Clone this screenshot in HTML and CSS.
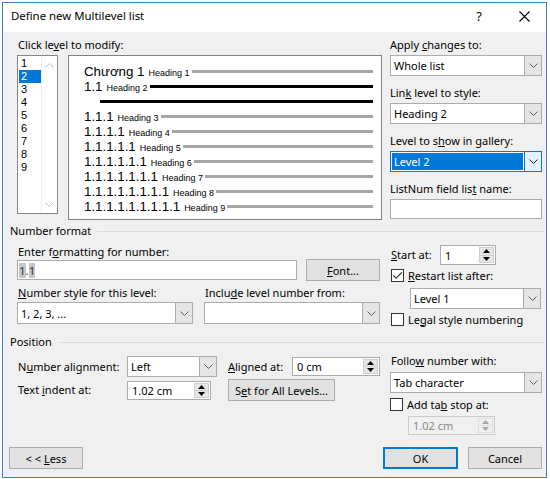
FILE: index.html
```html
<!DOCTYPE html>
<html>
<head>
<meta charset="utf-8">
<title>Define new Multilevel list</title>
<link rel="stylesheet" href="styles.css">
</head>
<body>
<div class="window">
  <div class="titlebar">
    <span class="title">Define new Multilevel list</span>
    <span class="help">?</span>
    <span class="close"><svg width="11" height="11" viewBox="0 0 11 11"><path d="M0.5 0.5L10.5 10.5M10.5 0.5L0.5 10.5" stroke="#000" stroke-width="1.1" fill="none"/></svg></span>
  </div>
  <div class="content">
    <div class="top">
      <div class="left-top">
        <div class="label ind">Click le<u>v</u>el to modify:</div>
        <div class="top-row">
          <div class="levels">
            <div class="level-items">
              <div class="lv">1</div>
              <div class="lv sel">2</div>
              <div class="lv">3</div>
              <div class="lv">4</div>
              <div class="lv">5</div>
              <div class="lv">6</div>
              <div class="lv">7</div>
              <div class="lv">8</div>
              <div class="lv">9</div>
            </div>
            <div class="vscroll">
              <svg width="9" height="5" viewBox="0 0 9 5"><path d="M0.5 4.5L4.5 0.5L8.5 4.5" stroke="#c2c2c2" fill="none"/></svg>
              <svg width="9" height="5" viewBox="0 0 9 5"><path d="M0.5 0.5L4.5 4.5L8.5 0.5" stroke="#c2c2c2" fill="none"/></svg>
            </div>
          </div>
          <div class="preview">
            <div class="prow"><span class="num">Chương 1</span><span class="hd">Heading 1</span><span class="bar"></span></div>
            <div class="prow"><span class="num">1.1</span><span class="hd">Heading 2</span><span class="bar dark"></span></div>
            <div class="prow indent"><span class="bar dark"></span></div>
            <div class="prow"><span class="num">1.1.1</span><span class="hd">Heading 3</span><span class="bar"></span></div>
            <div class="prow"><span class="num">1.1.1.1</span><span class="hd">Heading 4</span><span class="bar"></span></div>
            <div class="prow"><span class="num">1.1.1.1.1</span><span class="hd">Heading 5</span><span class="bar"></span></div>
            <div class="prow"><span class="num">1.1.1.1.1.1</span><span class="hd">Heading 6</span><span class="bar"></span></div>
            <div class="prow"><span class="num">1.1.1.1.1.1.1</span><span class="hd">Heading 7</span><span class="bar"></span></div>
            <div class="prow"><span class="num">1.1.1.1.1.1.1.1</span><span class="hd">Heading 8</span><span class="bar"></span></div>
            <div class="prow"><span class="num">1.1.1.1.1.1.1.1.1</span><span class="hd">Heading 9</span><span class="bar"></span></div>
          </div>
        </div>
      </div>
      <div class="right-top">
        <div class="field">
          <div class="label">Apply <u>c</u>hanges to:</div>
          <div class="combo"><span class="ctext">Whole list</span><span class="carrow"><svg width="9" height="5" viewBox="0 0 9 5"><path d="M0.5 0.5L4.5 4.5L8.5 0.5" stroke="#606060" fill="none"/></svg></span></div>
        </div>
        <div class="field">
          <div class="label">Lin<u>k</u> level to style:</div>
          <div class="combo"><span class="ctext">Heading 2</span><span class="carrow"><svg width="9" height="5" viewBox="0 0 9 5"><path d="M0.5 0.5L4.5 4.5L8.5 0.5" stroke="#606060" fill="none"/></svg></span></div>
        </div>
        <div class="field">
          <div class="label">Level to s<u>h</u>ow in gallery:</div>
          <div class="combo focus"><span class="ctext"><span class="hl">Level 2</span></span><span class="carrow"><svg width="9" height="5" viewBox="0 0 9 5"><path d="M0.5 0.5L4.5 4.5L8.5 0.5" stroke="#202020" fill="none"/></svg></span></div>
        </div>
        <div class="field">
          <div class="label">ListNum field lis<u>t</u> name:</div>
          <div class="textbox tall"></div>
        </div>
      </div>
    </div>

    <div class="group-head nf-head"><span>Number format</span></div>
    <div class="nf">
      <div class="nf-left">
        <div class="label ind">Enter f<u>o</u>rmatting for number:</div>
        <div class="fmt-row">
          <div class="textbox fmt"><span class="fmt-text"><span class="fld">1</span>.<span class="fld">1</span></span></div>
          <div class="button font-btn"><span><u>F</u>ont...</span></div>
        </div>
        <div class="pair labels2">
          <div class="label ind"><u>N</u>umber style for this level:</div>
          <div class="label ind">Inclu<u>d</u>e level number from:</div>
        </div>
        <div class="pair">
          <div class="combo"><span class="ctext">1, 2, 3, ...</span><span class="carrow"><svg width="9" height="5" viewBox="0 0 9 5"><path d="M0.5 0.5L4.5 4.5L8.5 0.5" stroke="#606060" fill="none"/></svg></span></div>
          <div class="combo"><span class="ctext"></span><span class="carrow"><svg width="9" height="5" viewBox="0 0 9 5"><path d="M0.5 0.5L4.5 4.5L8.5 0.5" stroke="#606060" fill="none"/></svg></span></div>
        </div>
      </div>
      <div class="nf-right">
        <div class="start-row">
          <span class="label start-lbl"><u>S</u>tart at:</span>
          <div class="spin start-spin"><span class="stext">1</span><span class="sbtns"><span class="sb"><svg width="7" height="4" viewBox="0 0 7 4"><path d="M0 4L3.5 0L7 4Z" fill="#000"/></svg></span><span class="sb"><svg width="7" height="4" viewBox="0 0 7 4"><path d="M0 0L3.5 4L7 0Z" fill="#000"/></svg></span></span></div>
        </div>
        <div class="check-row restart">
          <span class="cbox"><svg width="11" height="11" viewBox="0 0 11 11"><path d="M1.5 5.5L4.2 8.3L9.8 2.3" stroke="#222" stroke-width="1.1" fill="none"/></svg></span>
          <span class="label"><u>R</u>estart list after:</span>
        </div>
        <div class="combo level1"><span class="ctext">Level 1</span><span class="carrow"><svg width="9" height="5" viewBox="0 0 9 5"><path d="M0.5 0.5L4.5 4.5L8.5 0.5" stroke="#606060" fill="none"/></svg></span></div>
        <div class="check-row legal">
          <span class="cbox"></span>
          <span class="label">Le<u>g</u>al style numbering</span>
        </div>
      </div>
    </div>

    <div class="group-head pos-head"><span>Position</span></div>
    <div class="pos">
      <div class="pos-left">
        <div class="pos-row">
          <span class="label plbl">N<u>u</u>mber alignment:</span>
          <div class="combo align-combo"><span class="ctext">Left</span><span class="carrow"><svg width="9" height="5" viewBox="0 0 9 5"><path d="M0.5 0.5L4.5 4.5L8.5 0.5" stroke="#606060" fill="none"/></svg></span></div>
          <span class="label alabel"><u>A</u>ligned at:</span>
          <div class="spin aligned-spin"><span class="stext">0 cm</span><span class="sbtns"><span class="sb"><svg width="7" height="4" viewBox="0 0 7 4"><path d="M0 4L3.5 0L7 4Z" fill="#000"/></svg></span><span class="sb"><svg width="7" height="4" viewBox="0 0 7 4"><path d="M0 0L3.5 4L7 0Z" fill="#000"/></svg></span></span></div>
        </div>
        <div class="pos-row second">
          <span class="label plbl">Text <u>i</u>ndent at:</span>
          <div class="spin indent-spin"><span class="stext">1.02 cm</span><span class="sbtns"><span class="sb"><svg width="7" height="4" viewBox="0 0 7 4"><path d="M0 4L3.5 0L7 4Z" fill="#000"/></svg></span><span class="sb"><svg width="7" height="4" viewBox="0 0 7 4"><path d="M0 0L3.5 4L7 0Z" fill="#000"/></svg></span></span></div>
          <div class="button setall-btn"><span>S<u>e</u>t for All Levels...</span></div>
        </div>
      </div>
      <div class="pos-right">
        <div class="label">Follo<u>w</u> number with:</div>
        <div class="combo follow"><span class="ctext">Tab character</span><span class="carrow"><svg width="9" height="5" viewBox="0 0 9 5"><path d="M0.5 0.5L4.5 4.5L8.5 0.5" stroke="#606060" fill="none"/></svg></span></div>
        <div class="check-row addtab">
          <span class="cbox"></span>
          <span class="label">Add ta<u>b</u> stop at:</span>
        </div>
        <div class="spin disabled tab-spin"><span class="stext">1.02 cm</span><span class="sbtns"><span class="sb"><svg width="7" height="4" viewBox="0 0 7 4"><path d="M0 4L3.5 0L7 4Z" fill="#a8a8a8"/></svg></span><span class="sb"><svg width="7" height="4" viewBox="0 0 7 4"><path d="M0 0L3.5 4L7 0Z" fill="#a8a8a8"/></svg></span></span></div>
      </div>
    </div>

    <div class="bottom">
      <div class="button less-btn"><span>&lt; &lt; <u>L</u>ess</span></div>
      <div class="bottom-right">
        <div class="button ok-btn"><span>OK</span></div>
        <div class="button cancel-btn"><span>Cancel</span></div>
      </div>
    </div>
  </div>
</div>
</body>
</html>
```

FILE: styles.css
```css
* { box-sizing: border-box; }
html, body { margin: 0; padding: 0; }
body {
  width: 550px;
  height: 479px;
  overflow: hidden;
  background: #ffffff;
  font-family: "Noto Sans", "Open Sans", sans-serif;
  font-size: 11px;
  color: #000;
}
u { text-decoration: underline; text-underline-offset: 1px; }

.window {
  margin: 2px 0 0 2px;
  width: 545px;
  height: 476px;
  border: 1px solid #3b83c9;
  background: #f0f0f0;
  display: flex;
  flex-direction: column;
}

.titlebar {
  height: 29px;
  flex: none;
  background: #fff;
  display: flex;
  align-items: flex-start;
  padding: 5px 0 0 8px;
  font-size: 11.4px;
  line-height: 16px;
}
.title { flex: 1; }
.help { width: 14px; text-align: center; font-size: 13px; }
.close { width: 11px; height: 16px; margin: 0 16px 0 33px; display: flex; align-items: center; }

.content {
  flex: 1;
  display: flex;
  flex-direction: column;
  padding: 6px 0 8px 14px;
}

.label { line-height: 14px; height: 14px; white-space: nowrap; }
.ind { margin-left: 1px; }

/* top */
.top { display: flex; align-items: flex-start; }
.left-top { width: 365px; margin-right: 8px; }
.left-top > .label { margin-bottom: 3px; }
.top-row { display: flex; align-items: flex-start; }

.levels {
  width: 41px;
  height: 159px;
  border: 1px solid #828790;
  background: #fff;
  display: flex;
}
.level-items { width: 23px; padding-top: 1px; padding-left: 1px; }
.lv {
  height: 13px;
  line-height: 13px;
  padding-left: 2px;
  font-family: "Liberation Sans", Arial, sans-serif;
  font-size: 11px;
}
.lv.sel { background: #0078d7; color: #fff; }
.vscroll {
  width: 16px;
  border-left: 1px solid #f0f0f0;
  display: flex;
  flex-direction: column;
  justify-content: space-between;
  align-items: center;
  padding: 7px 0 6px;
}

.preview {
  margin-left: 10px;
  width: 314px;
  height: 165px;
  border: 1px solid #828282;
  background: #fff;
  padding: 8px 8px 0 15px;
  font-family: "Liberation Sans", Arial, sans-serif;
}
.prow {
  height: 15px;
  display: flex;
  align-items: baseline;
}
.prow.indent { padding-left: 16px; }
.num { font-size: 13.3px; line-height: 15px; }
.hd { font-size: 9px; line-height: 15px; margin-left: 4px; }
.bar {
  flex: 1;
  height: 3px;
  margin-left: 2px;
  background: #a6a6a6;
  align-self: center;
}
.prow.indent .bar { margin-left: 0; }
.bar.dark { background: #000; }

.right-top { width: 152px; }
.field { margin-bottom: 10px; }
.field:last-child { margin-bottom: 0; }
.field .label { margin-bottom: 3px; }

/* combos */
.combo {
  height: 21px;
  border: 1px solid #acacac;
  background: #fff;
  display: flex;
  align-items: stretch;
}
.ctext {
  flex: 1;
  padding-left: 3px;
  display: flex;
  align-items: center;
  white-space: nowrap;
}
.carrow {
  width: 17px;
  background: #e5e5e5;
  border-left: 1px solid #acacac;
  display: flex;
  align-items: center;
  justify-content: center;
}
.combo.focus { border-color: #0078d7; }
.combo.focus .ctext { padding: 1px; }
.combo.focus .hl {
  flex: 1;
  align-self: stretch;
  background: #0078d7;
  color: #fff;
  padding-left: 2px;
  display: flex;
  align-items: center;
}
.combo.focus .carrow { background: #e5f1fb; border-left-color: #0078d7; }

.textbox {
  height: 20px;
  border: 1px solid #acacac;
  background: #fff;
}

/* group headers */
.group-head {
  margin-left: -7px;
  display: flex;
  align-items: center;
  line-height: 14px;
  height: 14px;
  white-space: nowrap;
}
.group-head::after {
  content: "";
  flex: 1;
  height: 1px;
  background: #dcdcdc;
  margin: 0 2px 0 6px;
}
.nf-head { margin-top: 4px; }

/* number format */
.nf { display: flex; align-items: flex-start; margin-top: 7px; }
.nf-left { width: 363px; }
.fmt-row { display: flex; align-items: center; height: 22px; }
.fmt {
  width: 280px;
  display: flex;
  align-items: center;
  padding-left: 1px;
  color: #333;
  font-size: 11.5px;
}
.fld { background: #c8c8c8; }
.button {
  height: 22px;
  background: #e1e1e1;
  border: 1px solid #adadad;
  display: flex;
  align-items: center;
  justify-content: center;
  white-space: nowrap;
}
.font-btn { width: 74px; margin-left: 9px; }
.pair { display: grid; grid-template-columns: 176px 176px; column-gap: 11px; }
.labels2 { margin-top: 5px; margin-bottom: 2px; }
.pair .combo { height: 22px; }

.nf-right { width: 152px; margin-left: 10px; }
.start-row { display: flex; align-items: center; height: 20px; }
.start-lbl { width: 50px; padding-left: 1px; }

.spin {
  height: 19px;
  border: 1px solid #acacac;
  background: #fff;
  display: flex;
  align-items: stretch;
}
.start-spin { width: 56px; height: 20px; }
.stext { flex: 1; padding-left: 4px; display: flex; align-items: center; white-space: nowrap; }
.sbtns {
  width: 16px;
  display: flex;
  flex-direction: column;
  padding: 1px 1px 1px 0;
}
.sb {
  flex: 1;
  background: #e5e5e5;
  border: 1px solid #cfcfcf;
  display: flex;
  align-items: center;
  justify-content: center;
}
.sb + .sb { border-top: none; }
.spin.disabled { background: #f0f0f0; border-color: #cccccc; color: #8a8a8a; }
.spin.disabled .sb { background: #f0f0f0; border-color: #dedede; }

.check-row { display: flex; align-items: center; height: 13px; }
.cbox {
  width: 13px;
  height: 13px;
  border: 1px solid #333;
  background: #fff;
  display: flex;
  align-items: center;
  justify-content: center;
  margin-right: 4px;
  flex: none;
}
.restart { margin-top: 4px; padding-left: 1px; }
.level1 { margin: 6px 0 0 20px; width: 131px; }
.legal { margin-top: 4px; padding-left: 1px; }

/* position */
.pos-head { margin-top: 9px; }
.pos { display: flex; align-items: flex-start; margin-top: 5px; }
.pos-left { width: 363px; padding-top: 2px; }
.pos-row { display: flex; align-items: center; height: 21px; }
.pos-row.second { height: 22px; margin-top: 2px; }
.plbl { width: 110px; padding-left: 1px; }
.align-combo { width: 90px; }
.alabel { width: 64px; margin-left: 11px; }
.aligned-spin { width: 88px; }
.indent-spin { width: 84px; }
.setall-btn { width: 107px; margin-left: 17px; }

.pos-right { width: 152px; margin-left: 10px; }
.pos-right > .label { padding-left: 1px; }
.follow { margin-top: 4px; }
.addtab { margin-top: 5px; }
.tab-spin { margin: 5px 0 0 18px; width: 87px; }

/* bottom */
.bottom {
  margin-top: auto;
  display: flex;
  justify-content: space-between;
  align-items: center;
}
.less-btn { width: 74px; margin-left: -8px; }
.bottom-right { display: flex; margin-right: 4px; }
.ok-btn {
  width: 75px;
  border-color: #0078d7;
  box-shadow: inset 0 0 0 1px #0078d7;
}
.cancel-btn { width: 74px; margin-left: 10px; }
```
